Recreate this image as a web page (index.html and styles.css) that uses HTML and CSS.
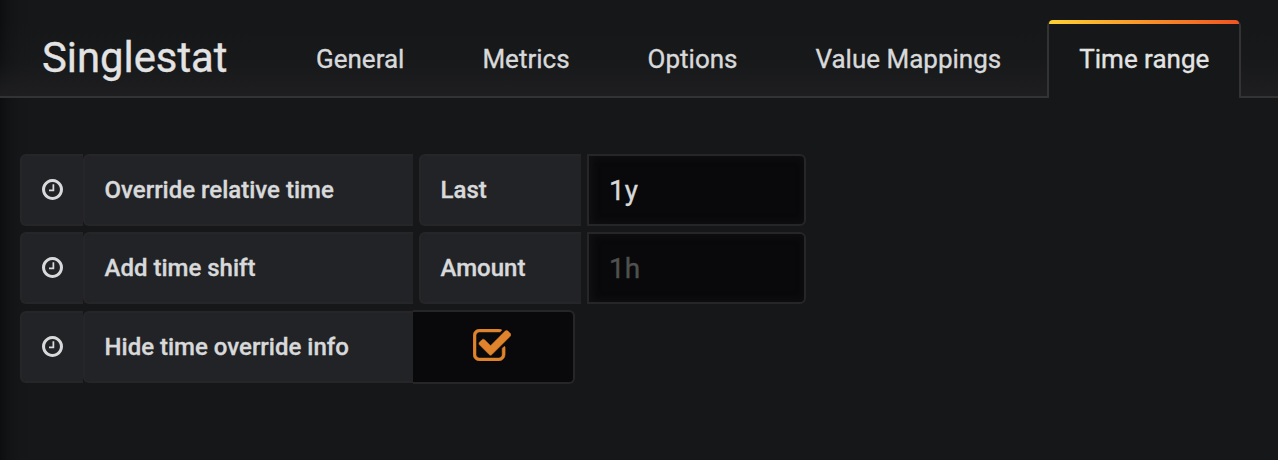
FILE: index.html
```html
<!DOCTYPE html>
<html lang="en">
<head>
<meta charset="utf-8">
<title>Singlestat</title>
<link rel="stylesheet" href="styles.css">
</head>
<body>
<svg class="sprite" aria-hidden="true">
  <symbol id="clock" viewBox="0 128 1536 1536"><path d="M896 544v448q0 14-9 23t-23 9h-320q-14 0-23-9t-9-23v-64q0-14 9-23t23-9h224v-352q0-14 9-23t23-9h64q14 0 23 9t9 23zm416 352q0-148-73-273t-198-198-273-73-273 73-198 198-73 273 73 273 198 198 273 73 273-73 198-198 73-273zm224 0q0 209-103 385.5t-279.5 279.5-385.5 103-385.5-103-279.5-279.5-103-385.5 103-385.5 279.5-279.5 385.5-103 385.5 103 279.5 279.5 103 385.5z"/></symbol>
  <symbol id="check" viewBox="64 128 1664 1408"><path d="M1472 930v318q0 119-84.5 203.5t-203.5 84.5h-832q-119 0-203.5-84.5t-84.5-203.5v-832q0-119 84.5-203.5t203.5-84.5h832q63 0 117 25 15 7 18 23 3 17-9 29l-49 49q-10 10-23 10-3 0-9-2-23-6-45-6h-832q-66 0-113 47t-47 113v832q0 66 47 113t113 47h832q66 0 113-47t47-113v-254q0-13 9-22l64-64q10-10 23-10 6 0 12 3 20 8 20 29zm231-489l-814 814q-24 24-57 24t-57-24l-430-430q-24-24-24-57t24-57l110-110q24-24 57-24t57 24l263 263 647-647q24-24 57-24t57 24l110 110q24 24 24 57t-24 57z"/></symbol>
</svg>
<main class="editor">
  <header class="editor-header">
    <h1 class="editor-title">Singlestat</h1>
    <nav class="tabs">
      <a class="tab">General</a>
      <a class="tab">Metrics</a>
      <a class="tab">Options</a>
      <a class="tab">Value Mappings</a>
      <a class="tab tab-active">Time range</a>
    </nav>
  </header>
  <form class="form">
    <div class="form-row">
      <span class="label label-icon"><svg class="clock"><use href="#clock"/></svg></span>
      <span class="label label-name">Override relative time</span>
      <span class="label label-unit">Last</span>
      <input class="input" type="text" value="1y">
    </div>
    <div class="form-row">
      <span class="label label-icon"><svg class="clock"><use href="#clock"/></svg></span>
      <span class="label label-name">Add time shift</span>
      <span class="label label-unit">Amount</span>
      <input class="input" type="text" placeholder="1h">
    </div>
    <div class="form-row">
      <span class="label label-icon"><svg class="clock"><use href="#clock"/></svg></span>
      <span class="label label-name">Hide time override info</span>
      <span class="checkbox"><svg class="check"><use href="#check"/></svg></span>
    </div>
  </form>
</main>
</body>
</html>
```
FILE: styles.css
```css
* { box-sizing: border-box; }
body {
  margin: 0;
  background: #161719;
  color: #d8d9da;
  font-family: Roboto, "Liberation Sans", sans-serif;
  -webkit-text-stroke: .35px currentColor;
}
.sprite { display: none; }
.editor {
  height: 460px;
  overflow: hidden;
  background: linear-gradient(90deg, #0d0e0f 0, #121314 8px, #151618 20px, #161719 34px);
}
.editor-header {
  display: flex;
  height: 98px;
  padding: 20px 0 0 42px;
  border-bottom: 2px solid #333334;
  background: linear-gradient(180deg, rgba(31, 31, 32, 0) 20px, rgba(31, 31, 32, .2) 62px, #1e1e20 100%);
}
.editor-title {
  width: 242px;
  margin: 0;
  font-size: 41.8px;
  font-weight: 400;
  line-height: 76px;
  color: #e3e3e3;
}
.tabs { display: flex; gap: 14px; }
.tab {
  height: 78px;
  padding: 0 30px;
  border: 2px solid transparent;
  font-size: 26px;
  line-height: 74px;
  white-space: nowrap;
}
.tab-active {
  position: relative;
  border-color: #333334;
  border-top: 0;
  border-bottom: 0;
  border-radius: 6px 6px 0 0;
  background: #161719;
  color: #e3e3e3;
  line-height: 78px;
}
.tab-active::before {
  content: "";
  position: absolute;
  top: 0;
  left: 0;
  right: 0;
  height: 4px;
  border-radius: 4px 4px 0 0;
  background: linear-gradient(90deg, #ffd234, #f89a2a 45%, #f05322);
}
.form {
  display: flex;
  flex-direction: column;
  gap: 6px;
  padding: 56px 20px 0;
}
.form-row { display: flex; height: 72px; }
.form-row:last-child { height: 73px; }
.label {
  display: flex;
  align-items: center;
  height: 72px;
  padding-left: 19.5px;
  border: 2px solid #262628;
  border-right: 0;
  border-radius: 6px 0 0 6px;
  background: #222326;
  font-size: 24px;
  font-weight: 500;
}
.form-row:last-child .label { margin-top: 1px; }
.label-icon { width: 63px; padding: 0 0 1px 20px; }
.label-name { width: 330px; }
.label-unit { width: 162px; margin: 0 6px; }
.clock { width: 21px; height: 21px; fill: #d8d9da; }
.input {
  width: 219px;
  height: 72px;
  padding: 0 20px;
  border: 2px solid #262628;
  border-radius: 0 6px 6px 0;
  background: #09090b;
  box-shadow: inset 2px 0 8px 1px rgba(22, 22, 24, .7);
  color: #d8d9da;
  font: 28px Roboto, "Liberation Sans", sans-serif;
}
.input::placeholder { color: #505050; opacity: 1; }
.checkbox {
  display: flex;
  align-items: center;
  width: 162px;
  height: 74px;
  padding: 0 0 4px 60px;
  border: 2px solid #262628;
  border-left: 0;
  border-radius: 0 6px 6px 0;
  background: #09090b;
}
.check {
  width: 38px;
  height: 32px;
  overflow: visible;
  fill: #e0832d;
  stroke: #e0832d;
  stroke-width: 24px;
}
```
